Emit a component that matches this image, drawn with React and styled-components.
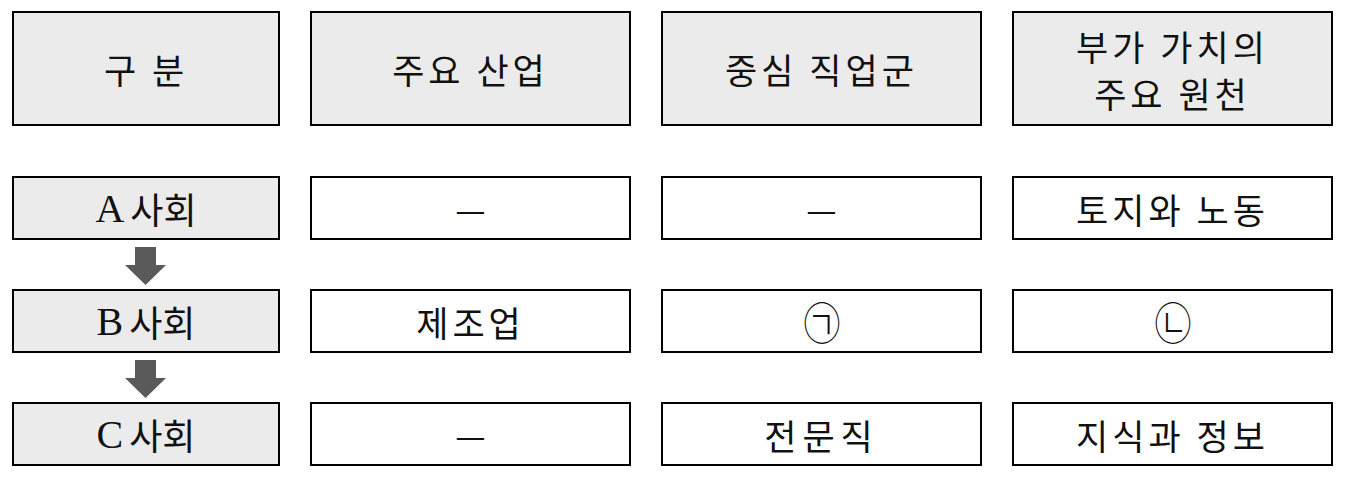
import React from 'react'
import styled, { createGlobalStyle } from 'styled-components'

const GlobalStyle = createGlobalStyle`
  body {
    margin: 0;
    background: #fff;
    font-family: "Noto Sans CJK KR", "Noto Sans", sans-serif;
  }
`;

const Board = styled.div`
  display: grid;
  grid-template-columns: 268px 321px 321px 321px;
  grid-template-rows: 115px 50px 64px 49px 64px 49px 64px;
  column-gap: 30px;
  padding: 11px 0 0 12px;
  width: 1345px;
  box-sizing: border-box;
`;

const Cell = styled.div`
  box-sizing: border-box;
  border: 2px solid #000;
  background: ${({ shaded }) => (shaded ? '#ebebeb' : '#fff')};
  display: flex;
  align-items: center;
  justify-content: center;
  text-align: center;
  color: #111;
  font-size: 35px;
  letter-spacing: ${({ wide }) => (wide ? '6px' : '4px')};
  line-height: 47px;
  white-space: pre;
`;

const Label = styled(Cell)`
  font-size: 36px;
  letter-spacing: 0;
  .latin {
    font-family: "Liberation Serif", serif;
    font-size: 40px;
    margin-right: 6px;
  }
`;

const Gap = styled.div`
  grid-column: 1 / -1;
`;

const ArrowSlot = styled.div`
  display: flex;
  justify-content: center;
  align-items: center;
  padding-top: 2px;
`;

const Empty = styled.div``;

const Mark = styled.span`
  font-size: ${({ circled }) => (circled ? '44px' : '34px')};
  font-weight: ${({ circled }) => (circled ? 300 : 400)};
  letter-spacing: 0;
  ${({ circled }) => circled && 'display: inline-block; transform: scaleX(0.85);'}
`;

const DownArrow = () => (
  <svg width="42" height="38" viewBox="0 0 42 38">
    <path d="M10 0 H31 V18 H41 L20.5 38 L0 18 H10 Z" fill="#5a5a5a" />
  </svg>
);

const rows = [
  { tag: 'A', cells: ['—', '—', '토지와 노동'] },
  { tag: 'B', cells: ['제조업', '㉠', '㉡'] },
  { tag: 'C', cells: ['—', '전문직', '지식과 정보'] },
];

const App = () => (
  <>
    <GlobalStyle />
    <Board>
      <Cell shaded>구 분</Cell>
      <Cell shaded>주요 산업</Cell>
      <Cell shaded>중심 직업군</Cell>
      <Cell shaded>{'부가 가치의\n주요 원천'}</Cell>
      <Gap />
      {rows.map((row, i) => (
        <React.Fragment key={row.tag}>
          <Label shaded>
            <span className="latin">{row.tag}</span>사회
          </Label>
          {row.cells.map((c, j) => (
            <Cell key={j} wide={c === '전문직'}>
              {c.length === 1 ? <Mark circled={c !== '—'}>{c}</Mark> : c}
            </Cell>
          ))}
          {i < rows.length - 1 && (
            <>
              <ArrowSlot><DownArrow /></ArrowSlot>
              <Empty /><Empty /><Empty />
            </>
          )}
        </React.Fragment>
      ))}
    </Board>
  </>
)

export default App
